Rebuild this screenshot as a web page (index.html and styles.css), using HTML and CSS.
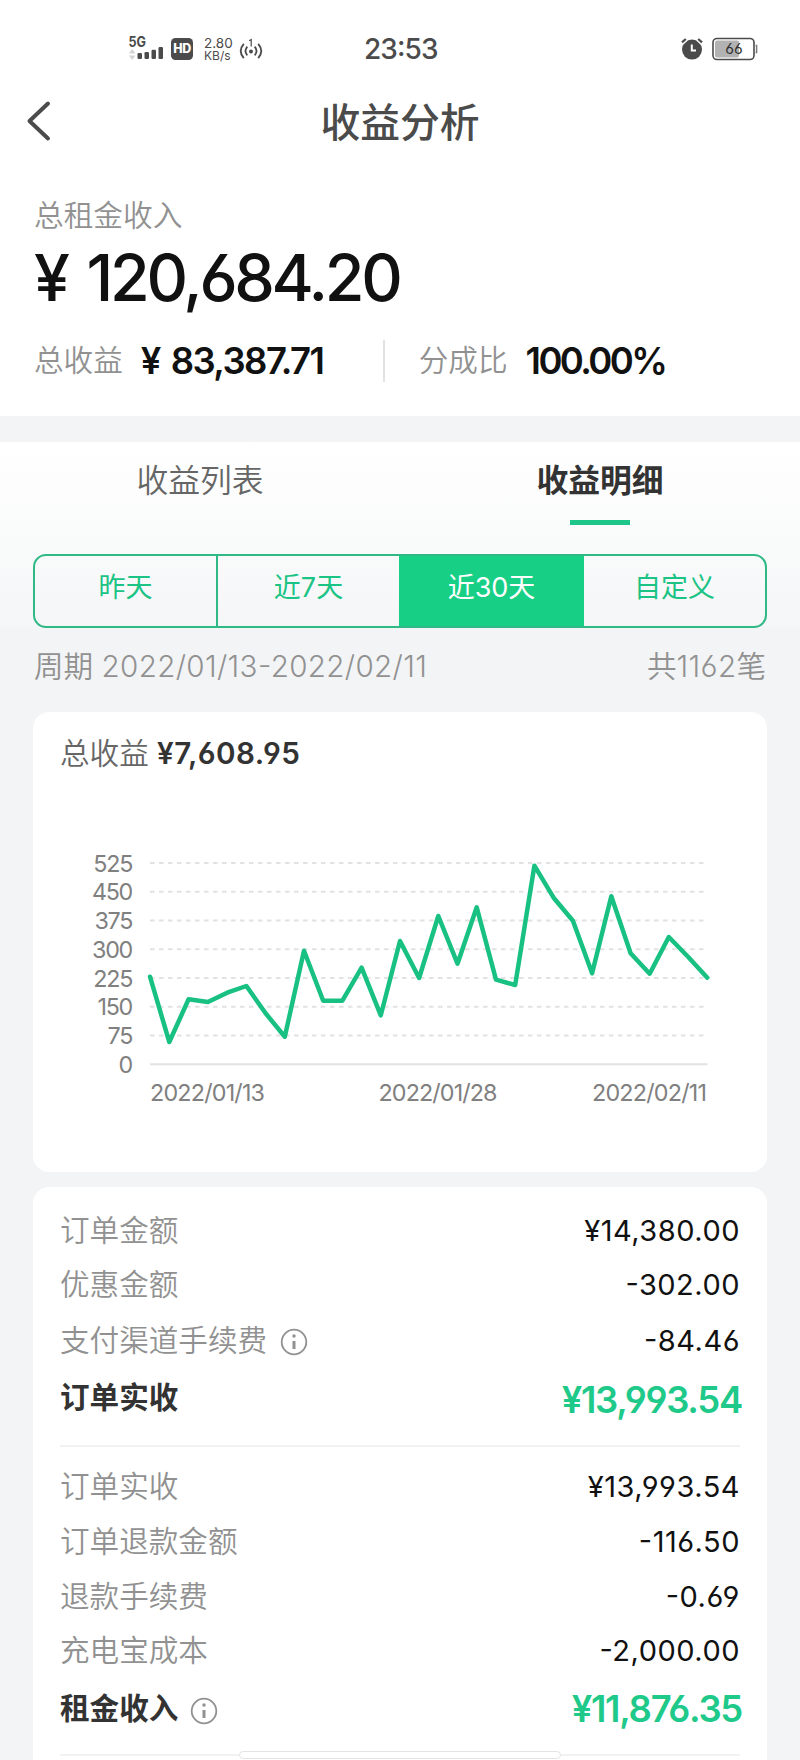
FILE: index.html
```html
<!DOCTYPE html>
<html lang="zh-CN">
<head>
  <meta charset="UTF-8" />
  <meta name="viewport" content="width=device-width, initial-scale=1.0"/>
  <title>收益分析</title>
  <link rel="stylesheet" href="styles.css">
</head>
<body>

  <!-- Status bar -->
  <div class="status-bar">
    <div class="status-left">
      <svg class="signal" width="36" height="30" viewBox="0 -4 36 30">
        <text x="0.5" y="11.5" class="signal-text" textLength="17.5" lengthAdjust="spacingAndGlyphs">5G</text>
        <path d="M1 18.5L4.2 14L7.4 18.5ZM1 20.5L4.2 25L7.4 20.5Z" fill="#d2d2d2"/>
        <g fill="#4b4b4b">
          <rect x="9.5" y="18" width="4.5" height="6" rx="1.2"/>
          <rect x="16.5" y="17" width="4.5" height="7" rx="1.2"/>
          <rect x="23.5" y="14.8" width="4.5" height="9.2" rx="1.2"/>
          <rect x="30.5" y="12" width="4.5" height="12" rx="1.2"/>
        </g>
      </svg>
      <div class="hd">HD</div>
      <div class="speed"><span>2.80</span><span>KB/s</span></div>
      <svg class="hotspot" width="24" height="22" viewBox="0 0 24 22" fill="none" stroke="#4b4b4b" stroke-width="1.8">
        <path d="M4.8 5.8Q-1.4 13 4.8 20.2M19.2 5.8Q25.4 13 19.2 20.2M8.3 8.6Q4.6 13 8.3 17.4M15.7 8.6Q19.4 13 15.7 17.4"/>
        <circle cx="12" cy="13.6" r="2" fill="#4b4b4b" stroke="none"/>
        <path d="M10.2 2.8L12.2 1.5V8.5" stroke-width="1.2"/>
      </svg>
    </div>
    <div class="clock">23:53</div>
    <div class="status-right">
      <svg width="22" height="24" viewBox="0 0 22 24">
        <circle cx="11" cy="12.6" r="10" fill="#4b4b4b"/>
        <path d="M1 5.4L4.8 2M17.2 2L21 5.4" stroke="#fff" stroke-width="5"/>
        <path d="M1 5.4L4.8 2M17.2 2L21 5.4" stroke="#4b4b4b" stroke-width="2.2"/>
        <path d="M10.8 7.6V13.6H15" fill="none" stroke="#fff" stroke-width="2"/>
      </svg>
      <svg width="46" height="24" viewBox="0 0 46 24">
        <rect x="1" y="1.5" width="41" height="21" rx="4" fill="#fff" stroke="#4b4b4b" stroke-width="1.6"/>
        <rect x="3" y="3.5" width="24" height="17" rx="2" fill="#b2b2b2"/>
        <path d="M43.6 8.5H44.6V15.5H43.6" fill="none" stroke="#777" stroke-width="1.4"/>
        <text x="22" y="17.4" class="battery-text">66</text>
      </svg>
    </div>
  </div>

  <!-- Title bar -->
  <div class="nav-bar">
    <svg class="back" width="26" height="42" viewBox="0 0 26 42">
      <path d="M22 3.5L3.5 21L22 38.5" fill="none" stroke="#4b4b4b" stroke-width="4" stroke-linecap="round" stroke-linejoin="round"/>
    </svg>
    <h1>收益分析</h1>
  </div>

  <!-- Summary -->
  <div class="summary">
    <div class="summary-label">总租金收入</div>
    <div class="summary-total"><span class="yen">¥</span>120,684.20</div>
    <div class="summary-row">
      <span class="label">总收益</span>
      <span class="value income"><span class="yen">¥</span>83,387.71</span>
      <span class="divider"></span>
      <span class="label">分成比</span>
      <span class="value ratio">100.00%</span>
    </div>
  </div>

  <!-- Tabs and period filter -->
  <div class="filter">
    <div class="tabs">
      <div class="tab">收益列表</div>
      <div class="tab active">收益明细</div>
    </div>
    <div class="segments">
      <div class="segment">昨天</div>
      <div class="segment">近7天</div>
      <div class="segment active">近30天</div>
      <div class="segment">自定义</div>
    </div>
  </div>
  <div class="period">
    <span>周期 <span class="num">2022/01/13-2022/02/11</span></span>
    <span>共<span class="num">1162</span>笔</span>
  </div>

  <!-- Chart -->
  <div class="card chart-card">
    <div class="chart-title">总收益 <b>¥7,608.95</b></div>
    <svg class="chart" width="673" height="270" viewBox="60 840 673 270">
      <path class="grid" d="M150 863H707M150 891.8H707M150 920.5H707M150 949.2H707M150 978H707M150 1006.7H707M150 1035.5H707"/>
      <path class="axis" d="M150 1064.3H707.5"/>
      <g class="y-labels">
        <text x="132" y="871.5">525</text>
        <text x="132" y="900.2">450</text>
        <text x="132" y="929">375</text>
        <text x="132" y="957.7">300</text>
        <text x="132" y="986.5">225</text>
        <text x="132" y="1015.3">150</text>
        <text x="132" y="1044">75</text>
        <text x="132" y="1072.8">0</text>
      </g>
      <g class="x-labels">
        <text x="150" y="1100.5" textLength="115">2022/01/13</text>
        <text x="378.5" y="1100.5" textLength="119">2022/01/28</text>
        <text x="592" y="1100.5" textLength="115">2022/02/11</text>
      </g>
      <polyline class="line" points="150,976.7 169.3,1042 188.6,999.3 207.9,1002 227.2,992.7 246.4,986 265.6,1013.3 284.8,1036.7 304,950.7 323.2,1000.7 342.4,1000.7 361.6,967.7 380.8,1015.3 400,941 419.1,978 438.3,916 457.5,963.7 476.7,907.3 496,979.7 515.2,985 534.4,865.7 553.6,897.7 572.9,920.7 592.1,973.3 611.3,896.3 630.6,953.3 649.7,973.7 668.8,937 688,956.7 707.3,977.7"/>
    </svg>
  </div>

  <!-- Details -->
  <div class="card detail-card">
    <div class="group">
      <div class="row"><span class="name">订单金额</span><span class="amount">¥14,380.00</span></div>
      <div class="row"><span class="name">优惠金额</span><span class="amount">-302.00</span></div>
      <div class="row tall">
        <span class="name">支付渠道手续费</span>
        <svg class="info" width="28" height="28" viewBox="0 0 28 28"><circle cx="14" cy="14" r="12.3"/><path d="M14 13V21"/><circle class="dot" cx="14" cy="8" r="1.7"/></svg>
        <span class="amount">-84.46</span>
      </div>
      <div class="row total"><span class="name">订单实收</span><span class="amount">¥13,993.54</span></div>
    </div>
    <div class="group">
      <div class="row"><span class="name">订单实收</span><span class="amount">¥13,993.54</span></div>
      <div class="row"><span class="name">订单退款金额</span><span class="amount">-116.50</span></div>
      <div class="row"><span class="name">退款手续费</span><span class="amount">-0.69</span></div>
      <div class="row"><span class="name">充电宝成本</span><span class="amount">-2,000.00</span></div>
      <div class="row total">
        <span class="name">租金收入</span>
        <svg class="info" width="28" height="28" viewBox="0 0 28 28"><circle cx="14" cy="14" r="12.3"/><path d="M14 13V21"/><circle class="dot" cx="14" cy="8" r="1.7"/></svg>
        <span class="amount">¥11,876.35</span>
      </div>
    </div>
  </div>

  <div class="home-bar"></div>

</body>
</html>
```
FILE: styles.css
```css
* {
  box-sizing: border-box;
}
body {
  position: relative;
  height: 1760px;
  margin: 0;
  overflow: hidden;
  background: #f3f4f6;
  font-family: Inter, "Noto Sans CJK SC", sans-serif;
  font-feature-settings: "case", "cv03", "cv04";
}

/* Status bar */
.status-bar {
  display: flex;
  justify-content: space-between;
  height: 88px;
  padding: 0 42px 0 128px;
  background: #fff;
  color: #4b4b4b;
}
.status-left {
  display: flex;
  width: 235px;
  padding-top: 35px;
}
.signal {
  margin-top: -4px;
}
.signal-text {
  font-size: 14.5px;
  font-weight: 700;
  fill: #4b4b4b;
}
.hd {
  width: 22px;
  height: 22px;
  margin: 3px 0 0 7px;
  border-radius: 4.5px;
  background: #4b4b4b;
  color: #fff;
  font-size: 12.5px;
  font-weight: 800;
  line-height: 22px;
  letter-spacing: -0.4px;
  text-align: center;
}
.speed {
  display: flex;
  flex-direction: column;
  width: 29px;
  margin: 2px 0 0 11px;
  font-size: 13.5px;
  line-height: 12.5px;
}
.speed span:last-child {
  font-size: 12px;
}
.hotspot {
  margin: 3px 0 0 6px;
}
.clock {
  flex: 1;
  padding-left: 1px;
  font-size: 28px;
  font-weight: 500;
  line-height: 99px;
  letter-spacing: -0.9px;
}
.status-right {
  display: flex;
  gap: 9px;
  padding-top: 37px;
}
.battery-text {
  font-size: 15px;
  text-anchor: middle;
  fill: #333;
}

/* Title bar */
.nav-bar {
  display: flex;
  align-items: center;
  height: 66px;
  padding: 0 26px;
  background: #fff;
}
.nav-bar h1 {
  flex: 1;
  margin: 3px 26px 0 0;
  color: #4b4b4b;
  font-size: 39.8px;
  font-weight: 500;
  line-height: 66px;
  text-align: center;
}

/* Summary */
.summary {
  height: 262px;
  padding: 36px 34px 0;
  background: #fff;
}
.summary-label {
  color: #919191;
  font-size: 29.7px;
  font-weight: 350;
  line-height: 50px;
}
.summary-total {
  color: #111;
  font-size: 64.5px;
  font-weight: 550;
  line-height: 76px;
  letter-spacing: -3.3px;
}
.summary-total .yen {
  margin-right: 20px;
}
.summary-row {
  display: flex;
  align-items: center;
  height: 90px;
}
.summary-row .label {
  margin-bottom: 6px;
  color: #919191;
  font-size: 29.6px;
  font-weight: 350;
}
.summary-row .value {
  margin-left: 18px;
  color: #111;
  font-size: 36.5px;
  font-weight: 600;
  letter-spacing: -1.6px;
}
.summary-row .income {
  width: 242px;
}
.summary-row .ratio {
  letter-spacing: -2.6px;
}
.summary-row .yen {
  margin-right: 11px;
}
.summary-row .divider {
  width: 2px;
  height: 42px;
  margin-right: 34px;
  background: #e2e2e2;
}

/* Tabs and period filter */
.filter {
  height: 186px;
  margin-top: 26px;
  padding: 0 33px;
  background: linear-gradient(#fff, #f5f6f7);
}
.tabs {
  display: flex;
  height: 112px;
  margin: 0 -33px;
}
.tab {
  flex: 1;
  display: flex;
  flex-direction: column;
  align-items: center;
  color: #666;
  font-size: 31.8px;
  font-weight: 350;
  line-height: 78px;
}
.tab.active {
  color: #333;
  font-weight: 700;
}
.tab.active::after {
  content: "";
  width: 60px;
  height: 5px;
  background: #1fc68a;
}
.segments {
  display: flex;
  height: 74px;
  overflow: hidden;
  border: 2px solid #2fb985;
  border-radius: 13px;
}
.segment {
  flex: 1;
  color: #1bc484;
  font-size: 27px;
  line-height: 64px;
  text-align: center;
}
.segment + .segment {
  border-left: 2px solid #2fb985;
}
.segment.active {
  border-color: #17cf85;
  background: #17cf85;
  color: #fff;
}
.segment.active + .segment {
  border-color: #17cf85;
}
.period {
  display: flex;
  justify-content: space-between;
  height: 84px;
  padding: 0 34px;
  color: #919191;
  font-size: 29.6px;
  font-weight: 350;
  line-height: 76px;
}
.num {
  letter-spacing: 0.35px;
}

/* Cards */
.card {
  margin: 0 33px;
  border-radius: 16px;
  background: #fff;
}
.chart-card {
  height: 460px;
  padding: 16px 27px;
}
.chart-title {
  height: 112px;
  color: #666;
  font-size: 29.6px;
  font-weight: 350;
  line-height: 50px;
}
.chart-title b {
  color: #333;
  font-weight: 600;
  letter-spacing: 0.4px;
}
.chart {
  display: block;
}
.grid {
  fill: none;
  stroke: #e2e2e2;
  stroke-width: 2;
  stroke-dasharray: 4.5 4.5;
}
.axis {
  stroke: #e2e2e2;
  stroke-width: 2;
}
.y-labels, .x-labels {
  font-size: 23.3px;
  fill: #808080;
}
.y-labels {
  text-anchor: end;
  letter-spacing: -1.3px;
}
.line {
  fill: none;
  stroke: #18c182;
  stroke-width: 4.5;
  stroke-linecap: round;
  stroke-linejoin: round;
}

/* Details */
.detail-card {
  height: 600px;
  margin-top: 15px;
  padding: 17px 27px 0;
}
.group {
  border-bottom: 2px solid #f1f2f3;
}
.row {
  display: flex;
  align-items: center;
  height: 54px;
  color: #919191;
  font-size: 29.6px;
  font-weight: 350;
  line-height: 54px;
}
.row.tall {
  height: 57px;
}
.group + .group {
  padding-top: 13px;
}
.group + .group .row {
  height: 54.7px;
}
.name {
  margin-bottom: 2px;
}
.amount {
  margin-left: auto;
  color: #111;
  font-size: 29px;
  font-weight: 400;
  letter-spacing: 0.5px;
}
.row.total, .group + .group .row.total {
  height: 76px;
  padding-bottom: 14px;
  color: #333;
  font-weight: 700;
}
.group + .group .row.total {
  height: 75px;
}
.total .name {
  margin-bottom: 7px;
}
.group + .group .total .name {
  margin-bottom: 3px;
}
.total .amount {
  margin-right: -2px;
  color: #1fc98a;
  font-size: 36.5px;
  font-weight: 600;
  letter-spacing: -1.3px;
}
.info {
  margin: 2px 0 0 13px;
  fill: none;
  stroke: #919191;
  stroke-width: 1.8;
}
.info path {
  stroke-width: 3;
}
.info .dot {
  fill: #919191;
  stroke: none;
}
.total .info {
  margin: 3px 0 0 12px;
}

.home-bar {
  position: absolute;
  left: 239px;
  bottom: 1px;
  width: 322px;
  height: 8px;
  border: 1.5px solid #e4e4e4;
  border-radius: 4px;
  background: #fff;
}
```
